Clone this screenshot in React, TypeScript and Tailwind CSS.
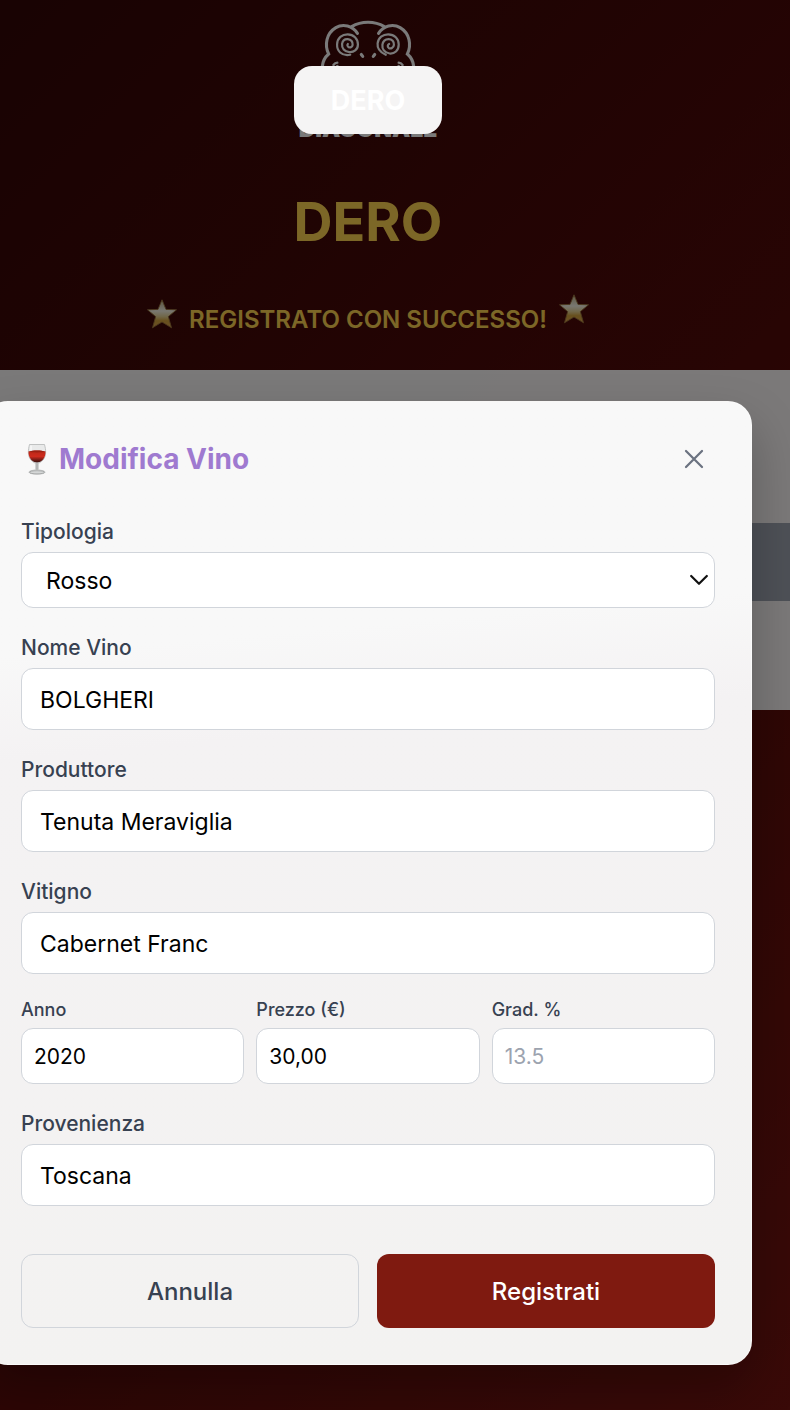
import React from "react";

const inputBase =
  "block w-full min-w-0 rounded-xl border border-[#d1d5db] bg-white text-black placeholder:text-[#9ca3af] focus:outline-none focus:ring-2 focus:ring-[#9f7ad0]";

function FrogLogo() {
  return (
    <svg
      viewBox="0 0 100 100"
      className="h-[100px] w-[100px]"
      fill="none"
      stroke="currentColor"
      strokeWidth="3.200"
      strokeLinecap="round"
      aria-hidden="true"
    >
      <path d="M33 9C43 3 57 3 67 9" />
      <path d="M39 16C34 8 24 5.500 16.500 10C6.500 16 4.500 28 9 37.500C5 41 3 45 2.500 50C1 72 20 86 50 86C80 86 99 72 97.500 50C97 45 95 41 91 37.500C95.500 28 93.500 16 83.500 10C76 5.500 66 8 61 16" />
      <path
        d="M31.500 38.300C22 40 17.500 34 17.800 27.500C18 20.500 23 17 28.800 17C35 17 39.500 21.500 39.500 27.500C39.500 33 35 36 30.500 35.500C25.500 35 22.500 31.500 23 27C23.500 23.500 26 21.800 29 22C32.500 22.300 34.300 25 34 28C33.700 30.800 30.500 31.500 29 29.500C28.300 28.500 28.500 27.500 29 27"
        strokeWidth="2.300"
      />
      <path
        d="M68.500 38.300C61 35 59.500 31 60 26.500C60.700 20.500 65.500 17 71 17C77.500 17 82 21.500 82 27.500C82 34 77.500 37.500 72.500 37C67 36.500 64.500 32 65 28C65.500 24.500 68 22 71.500 22C75 22 77.300 24.500 77 28C76.800 31 73.500 32.500 71.500 31C70 29.700 70.500 27.700 72 27"
        strokeWidth="2.300"
      />
      <path d="M43 38L44.500 40M57 38L55.500 40" />
      <path d="M14 49C15 47.500 16.500 46.500 18 46.500M86 49C85 47.500 83.500 46.500 82 46.500M18 50C30 68 70 68 82 50" strokeWidth="2.500" />
    </svg>
  );
}

function Star({ id, className }: { id: string; className?: string }) {
  return (
    <svg viewBox="0 0 30 30" className={`h-[30px] w-[30px] shrink-0 ${className ?? ""}`} aria-hidden="true">
      <defs>
        <linearGradient id={id} x1="0" y1="0" x2="0" y2="1">
          <stop offset="0" stopColor="#b8aa7c" />
          <stop offset="0.400" stopColor="#f2efe2" />
          <stop offset="0.600" stopColor="#e2cf92" />
          <stop offset="0.750" stopColor="#d0a03a" />
          <stop offset="1" stopColor="#d8a050" />
        </linearGradient>
      </defs>
      <path
        d="M15 .8L19 10.400L29.500 10.800L21.300 17.600L24.500 28.800L15 23L5.500 28.800L8.700 17.600L.5 10.800L11 10.400Z"
        fill={`url(#${id})`}
        stroke="#96703a"
        strokeWidth=".9"
        strokeLinejoin="round"
      />
    </svg>
  );
}

function WineGlass() {
  return (
    <svg viewBox="0 0 32 32" className="h-8 w-8 shrink-0" aria-hidden="true">
      <defs>
        <linearGradient id="wine" x1="0" y1="0" x2="0" y2="1">
          <stop offset="0" stopColor="#b82817" />
          <stop offset="0.500" stopColor="#cf2b1d" />
          <stop offset="1" stopColor="#32100f" />
        </linearGradient>
      </defs>
      <path
        d="M8.500 1.500H23.500C25 7 25.500 13 22 17C20 19.200 18 20 17.200 20.500V26.500C18 27.500 24 27.300 24 29.200C24 31.700 8 31.700 8 29.200C8 27.300 14 27.500 14.800 26.500V20.500C14 20 12 19.200 10 17C6.500 13 7 7 8.500 1.500Z"
        fill="#e9eaea"
        stroke="#b4b6b6"
        strokeWidth=".8"
      />
      <path d="M7.500 8.500C12 7 20 7 24.500 8.500C24.800 15 20.500 19.500 16 19.500C11.500 19.500 7.200 15 7.500 8.500Z" fill="url(#wine)" />
      <path d="M7.500 8.500C12 7 20 7 24.500 8.500C20 9.700 12 9.700 7.500 8.500Z" fill="#9c2113" />
      <path d="M16 20V27" stroke="#8b8d8d" strokeWidth="1" />
      <ellipse cx="16" cy="29.300" rx="7.500" ry="1.600" fill="#d5d7d7" stroke="#949696" strokeWidth=".7" />
      <path d="M10 2.500V7" stroke="#fff" strokeWidth="1" />
    </svg>
  );
}

function Field({ id, label, children }: { id: string; label: string; children: React.ReactNode }) {
  return (
    <div>
      <label htmlFor={id} className="mb-1 block text-[21px] leading-8 font-medium text-[#374151]">
        {label}
      </label>
      {children}
    </div>
  );
}

function TextField({ id, label, value }: { id: string; label: string; value: string }) {
  return (
    <Field id={id} label={label}>
      <input id={id} type="text" defaultValue={value} className={`${inputBase} h-[62px] px-[18px] pt-0.5 text-[23px]`} />
    </Field>
  );
}

function SmallField(props: { id: string; label: string; value?: string; placeholder?: string }) {
  return (
    <div className="min-w-0">
      <label htmlFor={props.id} className="mb-1.5 block text-[18px] leading-6 font-medium text-[#374151]">
        {props.label}
      </label>
      <input
        id={props.id}
        type="text"
        inputMode="decimal"
        defaultValue={props.value}
        placeholder={props.placeholder}
        className={`${inputBase} h-14 px-3 text-[21px]`}
      />
    </div>
  );
}

export default function App() {
  return (
    <div className="grid min-h-screen overflow-hidden font-['Inter',sans-serif]">
      <div className="col-start-1 row-start-1 flex flex-col bg-linear-135 from-[#320606] via-[#500a08] to-[#741410]">
        <header className="flex h-[370px] flex-col items-center pt-[18px] pr-[54px]">
          <div className="flex h-[126px] flex-col items-center text-[#f4f4f4]">
            <FrogLogo />
            <span className="text-[23px] leading-[30px] font-black">DIAGONALE</span>
          </div>
          <h1 className="mt-10 text-[54px] leading-[76px] font-bold text-[#f8cf4e]">DERO</h1>
          <div className="mt-[34px] flex h-[39px] items-center gap-3">
            <Star id="star-left" />
            <p className="self-end text-[24px] leading-[26px] font-semibold whitespace-nowrap text-[#f8cf4e]">
              REGISTRATO CON SUCCESSO!
            </p>
            <Star id="star-right" className="self-start" />
          </div>
        </header>
        <main className="h-[340px] bg-white/95 pt-[153px]">
          <div className="h-[78px] bg-[#9ca3af]" />
        </main>
      </div>

      <div className="z-10 col-start-1 row-start-1 bg-black/50 pt-[401px] pr-[38px] pb-[45px]">
        <form
          role="dialog"
          aria-labelledby="dialog-title"
          onSubmit={(e) => e.preventDefault()}
          className="-ml-4 rounded-3xl border border-white/40 bg-linear-175 from-[#f8f8f8] from-25% via-[#f4f2f3] via-35% to-[#f3f2f1] p-9 shadow-[0_25px_50px_rgba(0,0,0,0.25)]"
        >
          <div className="mb-9 flex h-[42px] items-center justify-between">
            <h2 id="dialog-title" className="flex items-center gap-1.5 text-[28px] leading-9 font-bold text-[#9f7ad0]">
              <WineGlass />
              Modifica Vino
            </h2>
            <button type="button" aria-label="Chiudi" className="flex h-[42px] w-[42px] items-center justify-center text-[#6b7280]">
              <svg viewBox="0 0 24 24" className="h-8 w-8" fill="none" stroke="currentColor" strokeWidth="1.700" strokeLinecap="round">
                <path d="M18 6L6 18M6 6l12 12" />
              </svg>
            </button>
          </div>

          <div className="flex flex-col gap-6">
            <Field id="tipologia" label="Tipologia">
              <div className="relative">
                <select id="tipologia" defaultValue="Rosso" className={`${inputBase} h-14 appearance-none pt-0.5 pr-9 pl-6 text-[23px]`}>
                  <option>Rosso</option>
                  <option>Bianco</option>
                  <option>Rosato</option>
                </select>
                <svg
                  viewBox="0 0 18 12"
                  className="pointer-events-none absolute top-[22px] right-[7px] h-3 w-[18px]"
                  fill="none"
                  stroke="#111"
                  strokeWidth="2.200"
                  strokeLinecap="round"
                  strokeLinejoin="round"
                >
                  <path d="M1.200 2L9 9.800L16.800 2" />
                </svg>
              </div>
            </Field>
            <TextField id="nome" label="Nome Vino" value="BOLGHERI" />
            <TextField id="produttore" label="Produttore" value="Tenuta Meraviglia" />
            <TextField id="vitigno" label="Vitigno" value="Cabernet Franc" />
            <div className="grid grid-cols-3 gap-3">
              <SmallField id="anno" label="Anno" value="2020" />
              <SmallField id="prezzo" label="Prezzo (€)" value="30,00" />
              <SmallField id="grad" label="Grad. %" placeholder="13.5" />
            </div>
            <TextField id="provenienza" label="Provenienza" value="Toscana" />
          </div>

          <div className="mt-12 grid grid-cols-2 gap-[18px] text-[24px] leading-9 font-medium">
            <button type="button" className="h-[74px] rounded-xl border border-[#d1d5db] pt-0.5 text-[#374151]">
              Annulla
            </button>
            <button type="submit" className="h-[74px] rounded-xl bg-[#7f1a10] pt-0.5 text-white">
              Registrati
            </button>
          </div>
        </form>
      </div>

      <div className="z-20 col-start-1 row-start-1 mt-[66px] mr-[54px] flex h-[68px] w-[148px] items-center justify-center justify-self-center rounded-[18px] bg-[#f5f4f4] pt-0.5 text-[27px] font-bold text-white">
        DERO
      </div>
    </div>
  );
}
